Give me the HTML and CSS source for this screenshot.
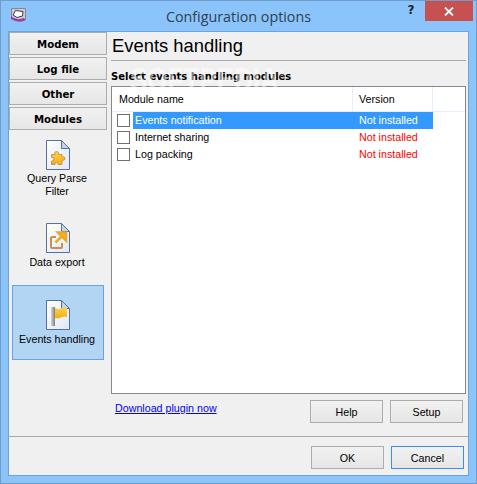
FILE: index.html
```html
<!DOCTYPE html>
<html lang="en">

<head>
    <meta charset="UTF-8">
    <title>Configuration options</title>
    <link rel="stylesheet" href="styles.css">
</head>

<body>
    <svg class="defs" width="0" height="0">
        <defs>
            <linearGradient id="page" x1="0" y1="0" x2="1" y2="1">
                <stop offset="0" stop-color="#ffffff"/>
                <stop offset="1" stop-color="#dfe9f6"/>
            </linearGradient>
            <linearGradient id="gold" x1="0" y1="0" x2="0" y2="1">
                <stop offset="0" stop-color="#fbd24c"/>
                <stop offset="1" stop-color="#f4ae10"/>
            </linearGradient>
            <linearGradient id="pole" x1="0" y1="0" x2="1" y2="0">
                <stop offset="0" stop-color="#d8d8d8"/>
                <stop offset="1" stop-color="#7d7d7d"/>
            </linearGradient>
        </defs>
    </svg>
    <div class="window">
        <div class="titlebar">
            <svg class="app-icon" width="15" height="15" viewBox="0 0 15 15">
                <path d="M0.500 11 V0.500 H14.500 V11" fill="#cfcbd2" stroke="#8a8490"/>
                <path d="M2 7 L4.500 2.500 L12 3.500 L11.500 8 L6 9.500 Z" fill="#fff" stroke="#3e3848"/>
                <path d="M0 8 Q5 13 13 10 L15 12 Q8 16 0 11 Z" fill="#9a3fa8"/>
            </svg>
            <div class="title">Configuration options</div>
            <div class="help-mark">?</div>
            <div class="close-btn">
                <svg width="10" height="9" viewBox="0 0 10 9"><path d="M1 0.500 L9 8.500 M9 0.500 L1 8.500" stroke="#fff" stroke-width="1.800"/></svg>
            </div>
        </div>
        <div class="client">
            <div class="main">
                <div class="sidebar">
                    <div class="tabs">
                        <button class="tab">Modem</button>
                        <button class="tab">Log file</button>
                        <button class="tab">Other</button>
                        <button class="tab">Modules</button>
                    </div>
                    <div class="module module-query">
                        <svg class="doc" width="24" height="30" viewBox="0 0 24 30">
                            <path d="M0.500 0.500 H15.500 L23.500 8.500 V29.500 H0.500 Z" fill="url(#page)" stroke="#55729f"/>
                            <path d="M15.500 0.500 V8.500 H23.500 Z" fill="#c5d3e6" stroke="#55729f"/>
                            <path d="M5.500 14.500 H9 Q8 11.500 10.500 11.500 Q13 11.500 12.500 14.500 H16 V17 Q19 16 19 18.500 Q19 21 16 20 V24.500 H12 Q12.500 22.500 10.500 22.500 Q8.500 22.500 9 24.500 H5.500 V21 Q8 21.500 8 19 Q8 17 5.500 17.500 Z" fill="url(#gold)" stroke="#d8914a"/>
                        </svg>
                        <span>Query Parse<br>Filter</span>
                    </div>
                    <div class="module module-export">
                        <svg class="doc" width="24" height="30" viewBox="0 0 24 30">
                            <path d="M0.500 0.500 H15.500 L23.500 8.500 V29.500 H0.500 Z" fill="url(#page)" stroke="#55729f"/>
                            <path d="M15.500 0.500 V8.500 H23.500 Z" fill="#c5d3e6" stroke="#55729f"/>
                            <path d="M10 14 H6 Q5 14 5 15 V24 Q5 25 6 25 H15 Q16 25 16 24 V20" fill="none" stroke="#cc8f4e" stroke-width="2"/>
                            <path d="M9.500 19.500 L15 14 M12 9.500 H20 V17.500 Z" fill="#f8bb25" stroke="#f0a820" stroke-width="2.500"/>
                        </svg>
                        <span>Data export</span>
                    </div>
                    <div class="module module-events">
                        <svg class="doc" width="24" height="30" viewBox="0 0 24 30">
                            <path d="M0.500 0.500 H15.500 L23.500 8.500 V29.500 H0.500 Z" fill="url(#page)" stroke="#55729f"/>
                            <path d="M15.500 0.500 V8.500 H23.500 Z" fill="#c5d3e6" stroke="#55729f"/>
                            <rect x="5" y="7" width="4" height="19" fill="url(#pole)"/>
                            <path d="M9 8 Q13 10 16 8 Q19 7 21 8 V17 Q18 16 15 17.500 Q12 19 9 18 Z" fill="url(#gold)"/>
                        </svg>
                        <span>Events handling</span>
                    </div>
                </div>
                <div class="panel">
                    <h1 class="panel-title">Events handling</h1>
                    <div class="panel-label">Select events handling modules</div>
                    <div class="list">
                        <div class="list-head">
                            <div class="col-name">Module name</div>
                            <div class="col-version">Version</div>
                        </div>
                        <div class="list-row selected">
                            <span class="check"></span>
                            <div class="row-name">Events notification</div>
                            <div class="row-version">Not installed</div>
                        </div>
                        <div class="list-row">
                            <span class="check"></span>
                            <div class="row-name">Internet sharing</div>
                            <div class="row-version">Not installed</div>
                        </div>
                        <div class="list-row">
                            <span class="check"></span>
                            <div class="row-name">Log packing</div>
                            <div class="row-version">Not installed</div>
                        </div>
                    </div>
                    <div class="panel-actions">
                        <a class="download" href="#">Download plugin now</a>
                        <button class="btn">Help</button>
                        <button class="btn">Setup</button>
                    </div>
                </div>
            </div>
            <div class="footer">
                <button class="btn">OK</button>
                <button class="btn btn-default">Cancel</button>
            </div>
        </div>
        <div class="watermark">SOFTPEDIA<span class="reg">®</span></div>
    </div>
</body>

</html>
```

FILE: styles.css
```css
* {
    box-sizing: border-box;
}

body {
    margin: 0;
    font-family: "Liberation Sans", Arial, sans-serif;
    font-size: 10.700px;
    color: #000;
}

.defs {
    position: absolute;
}

.window {
    position: relative;
    width: 477px;
    height: 484px;
    padding: 0 7px 7px;
    background-color: #8ac4fa;
    border: 1px solid #6f9ccb;
    display: flex;
    flex-direction: column;
    overflow: hidden;
}

.titlebar {
    height: 30px;
    flex: none;
    display: flex;
    align-items: flex-start;
}

.app-icon {
    margin: 7px 6px 0 3px;
}

.title {
    flex: 1;
    text-align: center;
    padding: 6px 0 0 44px;
    font-family: "Open Sans", sans-serif;
    font-size: 14.300px;
    color: #2f3f50;
}

.help-mark {
    width: 20px;
    padding-top: 2px;
    font-family: "DejaVu Sans", sans-serif;
    font-weight: bold;
    font-size: 12px;
    text-align: center;
    color: #222;
}

.close-btn {
    width: 48px;
    height: 20px;
    margin: 0 -4px 0 4px;
    background-color: #c75050;
    display: flex;
    align-items: center;
    justify-content: center;
}

.client {
    flex: 1;
    background-color: #f0f0f0;
    display: flex;
    flex-direction: column;
    border: 1px solid #6ea2d8;
}

.main {
    flex: 1;
    display: flex;
}

.sidebar {
    width: 102px;
    flex: none;
}

.tab {
    display: block;
    width: 98px;
    height: 23px;
    margin-bottom: 2px;
    padding: 1px 0 0;
    font-family: "DejaVu Sans", sans-serif;
    font-weight: bold;
    font-size: 10.200px;
    color: #000;
    background: linear-gradient(#f1f1f1, #e6e6e6);
    border: 1px solid #adadad;
}

.module {
    width: 92px;
    margin-left: 3px;
    display: flex;
    flex-direction: column;
    align-items: center;
    text-align: center;
    line-height: 13px;
}

.module span {
    margin-top: 3px;
    padding-right: 2px;
}

.module-query {
    margin-top: 10px;
}

.module-query span {
    margin-top: 2px;
}

.module-export {
    margin-top: 25px;
}

.module-events {
    height: 75px;
    margin-top: 16px;
    padding-top: 14px;
    background-color: #b3d5f4;
    border: 1px solid #66a3e0;
}

.panel {
    flex: 1;
    padding-right: 2px;
    display: flex;
    flex-direction: column;
}

.panel-title {
    margin: 0;
    height: 29px;
    padding: 3px 0 0 1px;
    font-weight: normal;
    font-size: 18.400px;
    line-height: 22px;
    border-bottom: 1px solid #a8a8a8;
}

.panel-label {
    height: 25px;
    padding-top: 9px;
    font-family: "DejaVu Sans", sans-serif;
    font-weight: bold;
    font-size: 10px;
    line-height: 13px;
}

.list {
    height: 308px;
    background-color: #fff;
    border: 1px solid #828790;
}

.list-head {
    height: 25px;
    display: flex;
    align-items: center;
    border-bottom: 1px solid #e5eefa;
}

.col-name {
    width: 241px;
    height: 100%;
    padding: 6px 0 0 7px;
    border-right: 1px solid #e5eefa;
}

.col-version {
    width: 80px;
    height: 100%;
    padding: 6px 0 0 6px;
    border-right: 1px solid #e5eefa;
}

.list-row {
    height: 17px;
    display: flex;
    align-items: center;
    line-height: 17px;
}

.check {
    width: 13px;
    height: 13px;
    margin-left: 5px;
    flex: none;
    background-color: #fff;
    border: 1px solid #707070;
}

.row-name {
    width: 223px;
    margin-left: 3px;
    padding-left: 2px;
    height: 17px;
}

.row-version {
    width: 77px;
    padding-left: 3px;
    color: #f00;
}

.selected .row-name,
.selected .row-version {
    background-color: #3399ff;
    color: #fff;
}

.panel-actions {
    display: flex;
    align-items: flex-start;
    margin-top: 6px;
    padding-right: 3px;
    gap: 7px;
}

.download {
    flex: 1;
    padding: 2px 0 0 4px;
    color: #00f;
}

.btn {
    width: 73px;
    height: 23px;
    padding: 0;
    font-family: "Liberation Sans", Arial, sans-serif;
    font-size: 10.700px;
    color: #000;
    background: linear-gradient(#f1f1f1, #e6e6e6);
    border: 1px solid #adadad;
}

.btn-default {
    border-color: #3c8fe6;
}

.footer {
    height: 39px;
    flex: none;
    padding: 9px 4px 0 0;
    display: flex;
    justify-content: flex-end;
    gap: 7px;
    border-top: 1px solid #a8a8a8;
}

.watermark {
    position: absolute;
    left: 129px;
    top: 63px;
    font-weight: bold;
    font-size: 26px;
    line-height: 24px;
    color: rgba(255, 255, 255, 0.5);
    transform: scaleY(1.3);
    pointer-events: none;
}

.reg {
    font-size: 8px;
    font-weight: normal;
    vertical-align: 10px;
}
```
